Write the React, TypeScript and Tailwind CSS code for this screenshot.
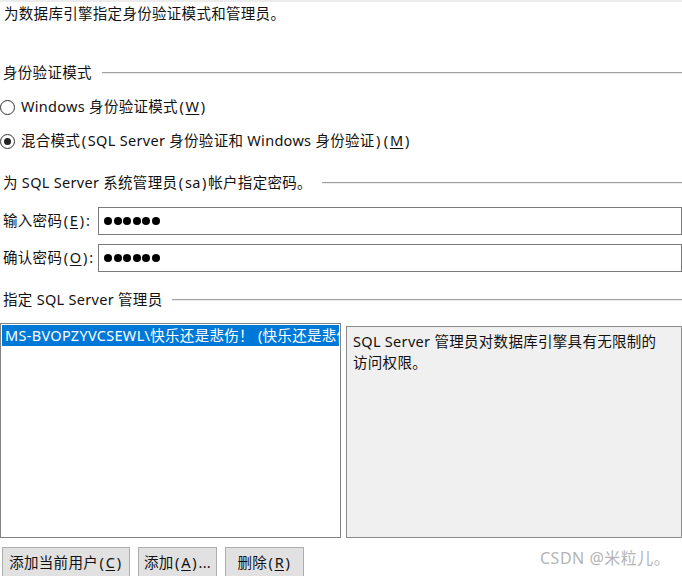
import React from "react";

const FONT = { fontFamily: '"Noto Sans", "Noto Sans CJK SC", sans-serif' };

// parenthesis with a bit of side bearing, like the Windows UI font
function L() {
  return <span className="mx-[1.5px]">(</span>;
}
function R() {
  return <span className="mx-[1.5px]">)</span>;
}

function Key({ k }: { k: string }) {
  return (
    <>
      <L />
      <span className="underline underline-offset-2">{k}</span>
      <R />
    </>
  );
}

function GroupHeader({ children }: { children: React.ReactNode }) {
  return (
    <div className="flex items-center h-[26px] pl-[3px]">
      <span className="whitespace-nowrap">{children}</span>
      <div className="flex-1 ml-[10px] flex flex-col">
        <div className="h-px bg-[#a0a0a0]" />
        <div className="h-px bg-[#ececec]" />
      </div>
    </div>
  );
}

function Radio({ checked, children }: { checked?: boolean; children: React.ReactNode }) {
  return (
    <div className="flex items-center h-[26px]">
      <div className="w-[15px] h-[15px] rounded-full border border-[#333] flex items-center justify-center bg-white">
        {checked && <div className="w-[7px] h-[7px] rounded-full bg-[#222]" />}
      </div>
      <span className="ml-[6px] whitespace-nowrap">{children}</span>
    </div>
  );
}

function PasswordRow({ label }: { label: React.ReactNode }) {
  return (
    <div className="flex items-center h-[28px]">
      <span className="w-[98px] pl-[3px] whitespace-nowrap">{label}</span>
      <div className="w-[584px] h-[28px] border border-[#7a7a7a] bg-white flex items-center pl-[5px] gap-[1.5px]">
        {[0, 1, 2, 3, 4, 5].map((i) => (
          <span key={i} className="w-[8px] h-[8px] rounded-full bg-black" />
        ))}
      </div>
    </div>
  );
}

function Btn({ children, w }: { children: React.ReactNode; w: string }) {
  return (
    <div className={`${w} h-[31px] bg-[#e1e1e1] border border-[#adadad] flex items-center justify-center whitespace-nowrap`}>
      {children}
    </div>
  );
}

export default function App() {
  return (
    <div
      className="relative w-[682px] h-[576px] overflow-hidden bg-white text-[14.5px] tracking-[0.3px] text-[#111]"
      style={FONT}
    >
      <div className="h-[2px] bg-[#ececec]" />

      {/* Intro */}
      <div className="h-[24px] flex items-center pl-[4px]">为数据库引擎指定身份验证模式和管理员。</div>

      {/* Auth mode */}
      <div className="mt-[34px]">
        <GroupHeader>身份验证模式</GroupHeader>
      </div>
      <div className="mt-[8px]">
        <Radio>
          Windows 身份验证模式<Key k="W" />
        </Radio>
      </div>
      <div className="mt-[8px]">
        <Radio checked>
          混合模式<L />SQL Server 身份验证和 Windows 身份验证<R /><Key k="M" />
        </Radio>
      </div>

      {/* sa password */}
      <div className="mt-[16px]">
        <GroupHeader>
          为 SQL Server 系统管理员<L />sa<R />帐户指定密码。
        </GroupHeader>
      </div>
      <div className="mt-[11px]">
        <PasswordRow label={<>输入密码<Key k="E" />:</>} />
      </div>
      <div className="mt-[9px]">
        <PasswordRow label={<>确认密码<Key k="O" />:</>} />
      </div>

      {/* Admins */}
      <div className="mt-[15px]">
        <GroupHeader>指定 SQL Server 管理员</GroupHeader>
      </div>
      <div className="mt-[10px] flex gap-[5px] h-[215px]">
        <div className="w-[341px] border border-[#828282] bg-white p-px overflow-hidden">
          <div className="h-[21px] bg-[#0078d7] text-white flex items-center pl-[3px] whitespace-nowrap overflow-hidden">
            MS-BVOPZYVCSEWL\快乐还是悲伤！ (快乐还是悲伤！)
          </div>
        </div>
        <div className="w-[336px] mt-[3px] border border-[#8c8c8c] bg-[#f0f0f0] px-[6px] pt-[4px] leading-[21px]">
          SQL Server 管理员对数据库引擎具有无限制的
          <br />
          访问权限。
        </div>
      </div>

      {/* Buttons */}
      <div className="mt-[9px] flex gap-[8px] pl-[2px]">
        <Btn w="w-[128px]">
          添加当前用户<Key k="C" />
        </Btn>
        <Btn w="w-[79px]">
          添加<Key k="A" />...
        </Btn>
        <Btn w="w-[79px]">
          删除<Key k="R" />
        </Btn>
      </div>

      <div className="absolute left-[540px] top-[546px] text-[16px] tracking-[0.5px] text-[#b4b4b4]">CSDN @米粒儿。</div>
    </div>
  );
}
